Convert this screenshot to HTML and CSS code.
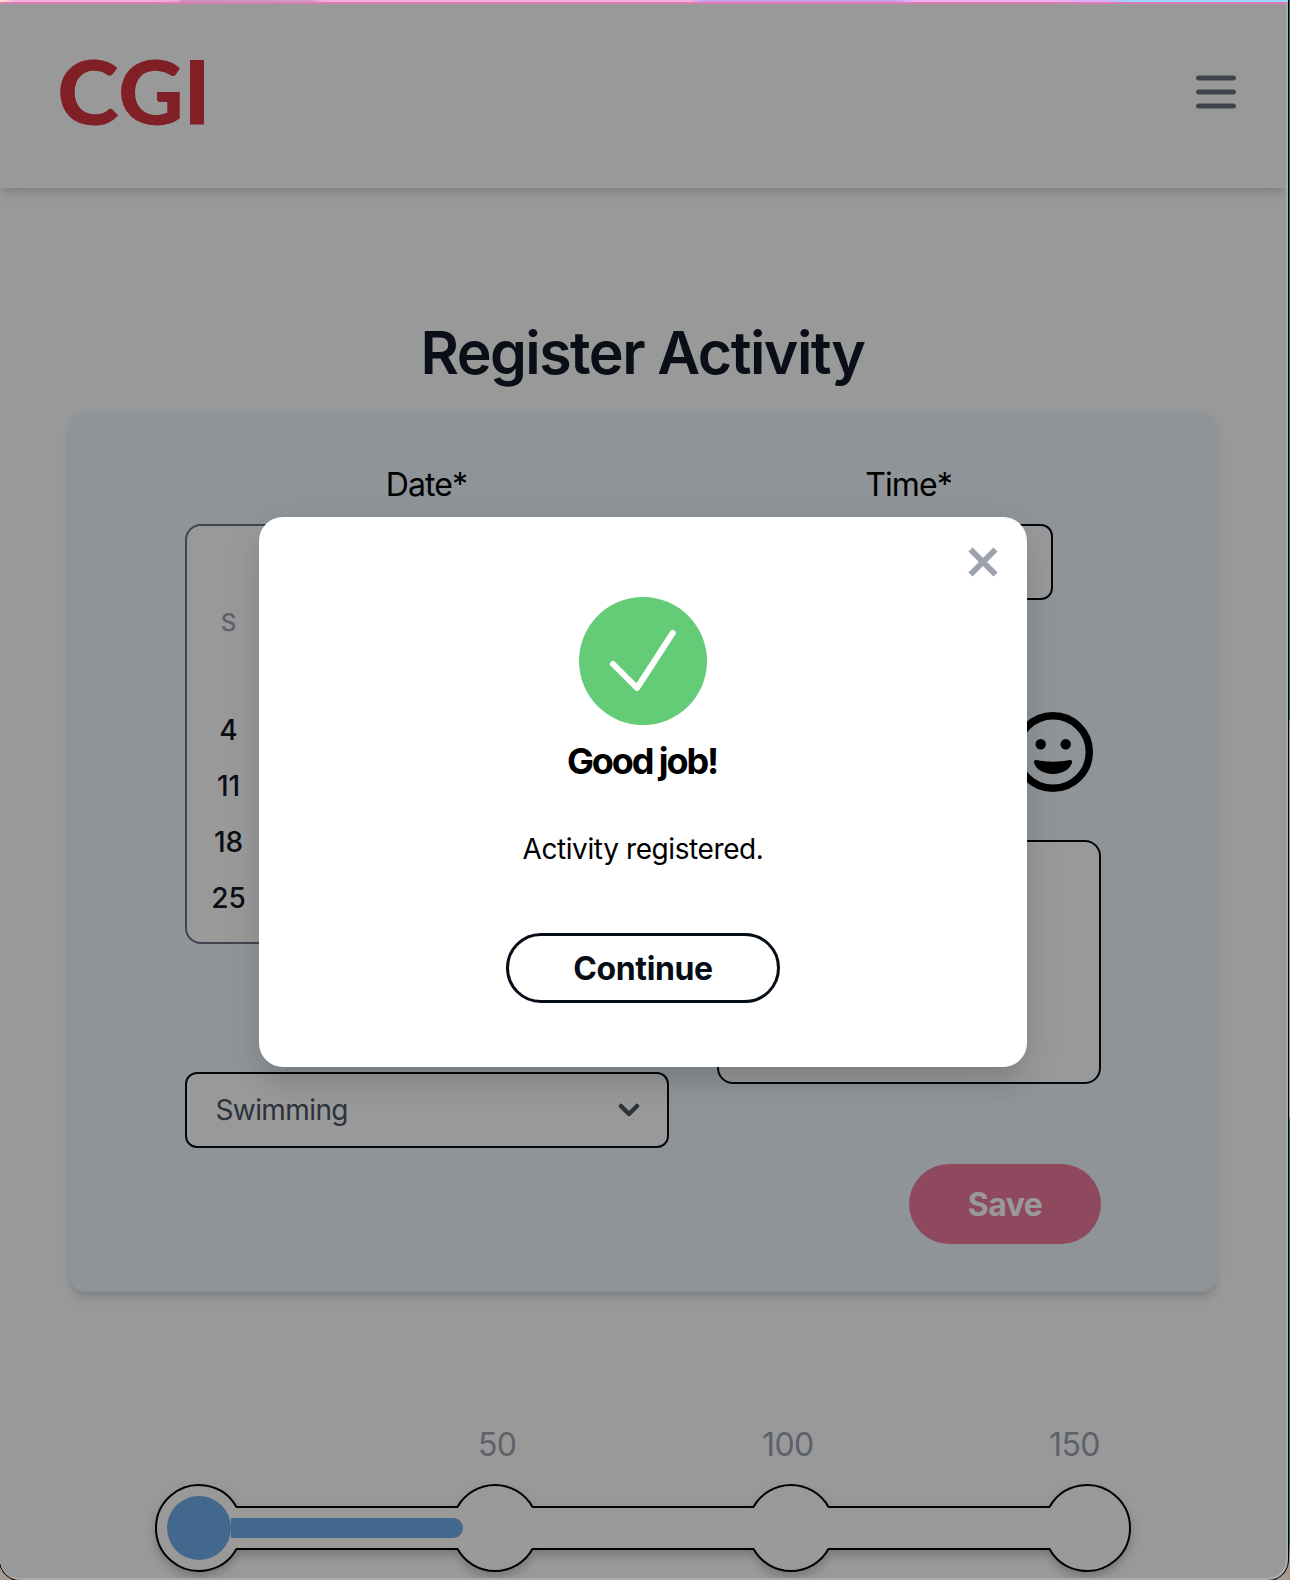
FILE: index.html
```html
<!DOCTYPE html>
<html lang="en">
<head>
<meta charset="utf-8">
<title>Register Activity</title>
<link rel="stylesheet" href="styles.css">
</head>
<body>
<div class="window">
  <div class="page">
    <header class="header">
      <svg class="logo" viewBox="-10 -30 166 130" width="166" height="130" role="img" aria-label="CGI">
        <text x="-3" y="66.500" textLength="62" lengthAdjust="spacingAndGlyphs">C</text>
        <text x="58" y="66.500" textLength="66" lengthAdjust="spacingAndGlyphs">G</text>
        <rect x="130" y="2" width="14" height="64.5"/>
      </svg>
      <svg class="menu" viewBox="0 0 40 36" width="40" height="36">
        <path d="M2.5 4h35M2.5 18h35M2.5 32h35"/>
      </svg>
    </header>
    <main class="main">
      <h1 class="title">Register Activity</h1>
      <section class="card">
        <div class="col col-date">
          <label class="label">Date*</label>
          <div class="calendar">
            <div class="weekday">S</div>
            <div class="day">4</div>
            <div class="day">11</div>
            <div class="day">18</div>
            <div class="day">25</div>
          </div>
          <div class="select">
            <span>Swimming</span>
            <svg viewBox="0 0 22 14" width="22" height="14"><path d="M3 3l8 8 8-8"/></svg>
          </div>
        </div>
        <div class="col col-time">
          <label class="label">Time*</label>
          <div class="time-input"></div>
          <svg class="smiley" viewBox="0 0 80 80" width="80" height="80">
            <circle cx="40" cy="40" r="36.3" fill="none" stroke="#000" stroke-width="7.4"/>
            <circle cx="27.7" cy="32.3" r="5.2"/>
            <circle cx="52.7" cy="32.3" r="5.2"/>
            <path d="M23.5 48c10 2.3 23 2.3 33 0 1.800-.3 3 1 2.500 2.600C57 57.500 50 62 40 62s-17-4.500-19-11.400C20.500 49 21.700 47.700 23.500 48z"/>
          </svg>
          <div class="textarea"></div>
          <button class="save">Save</button>
        </div>
      </section>
      <div class="progress">
        <div class="scale"><span>50</span><span>100</span><span>150</span></div>
        <svg class="track" viewBox="0 0 976 96" width="976" height="96">
          <path class="outline" d="M81.500 23H302.500A43 43 0 0 1 377.500 23H598.500A43 43 0 0 1 673.500 23H894.500A43 43 0 1 1 894.500 65H673.500A43 43 0 0 1 598.500 65H377.500A43 43 0 0 1 302.500 65H81.500A43 43 0 1 1 81.500 23Z"/>
          <circle class="fill" cx="44" cy="44" r="32"/>
          <path class="fill" d="M76 34H298.500a9.500 10 0 0 1 0 20H76z"/>
        </svg>
      </div>
    </main>
  </div>
  <div class="overlay">
    <div class="modal">
      <svg class="close" viewBox="0 0 30 30" width="30" height="30"><path d="M2.500 2.500l25 25M27.500 2.500l-25 25"/></svg>
      <svg class="check" viewBox="0 0 128 128" width="128" height="128">
        <circle cx="64" cy="64" r="64"/>
        <path d="M34 67l24 24 35.700-55"/>
      </svg>
      <h2 class="modal-title">Good job!</h2>
      <p class="modal-text">Activity registered.</p>
      <button class="continue">Continue</button>
    </div>
  </div>
</div>
</body>
</html>
```
FILE: styles.css
```css
* { box-sizing: border-box; }
body {
  margin: 0;
  width: 1290px;
  height: 1580px;
  overflow: hidden;
  font-family: Inter, "Liberation Sans", sans-serif;
  color: #000;
  background: linear-gradient(#28694a 0 719px, #999 721px 1117px, #28694a 1119px 1540px, #a59a92 1560px);
}
.window {
  position: relative;
  width: 1288px;
  height: 1580px;
  overflow: hidden;
  background: #aaa;
  border-radius: 0 0 20px 20px;
  box-shadow: 0 0 0 1px #000;
}
.window::before {
  content: "";
  display: block;
  height: 4px;
  background:
    linear-gradient(#e07cb4, #e07cb4) 0 2px / 100% 2px no-repeat,
    linear-gradient(90deg, #fde0d0 0, #f4b0dc 16px 150px, #e8a6d2 179px, #c894b8 181px, #d09cc0 310px, #f4b0dc 325px 690px, #c8a0f0 701px 895px, #eeb0f4 915px 1050px, #d8b0f4 1100px, #98d8f8 1130px);
}
.page {
  width: 1286px;
  height: 1574px;
  overflow: hidden;
  border-radius: 0 0 18px 18px;
  background: #fff;
}
.header {
  height: 184px;
  padding: 24px 50px 0 50px;
  display: flex;
  justify-content: space-between;
  align-items: flex-start;
  background: #fff;
  box-shadow: 0 8px 12px -2px rgba(0,0,0,.1), 0 4px 8px -2px rgba(0,0,0,.1);
}
.logo { fill: #d5353f; font: 900 90px Lato, sans-serif; }
.menu { margin-top: 46px; }
.menu path { fill: none; stroke: #6b7280; stroke-width: 5; stroke-linecap: round; }
.main { padding: 132px 69px 0 70px; }
.title {
  margin: 0 0 26px;
  padding-right: 2px;
  text-align: center;
  font-size: 59px;
  line-height: 66px;
  font-weight: 620;
  letter-spacing: -1.550px;
  color: #111827;
}
.card {
  width: 1147.500px;
  height: 880px;
  margin-left: -.5px;
  padding: 48px 115px 0 115.500px;
  display: flex;
  gap: 48px;
  border-radius: 16px;
  background: #eef6fc;
  background: #eef7fd;
  box-shadow: 0 8px 12px -2px rgba(0,0,0,.1), 0 4px 8px -2px rgba(0,0,0,.1);
}
.col { display: flex; flex-direction: column; flex: none; }
.col-date { width: 484px; }
.col-time { width: 384px; align-items: center; }
.label {
  display: block;
  height: 48px;
  margin-bottom: 16px;
  padding-right: 1px;
  line-height: 50px;
  text-align: center;
  font-size: 32px;
  letter-spacing: -.9px;
}
.calendar {
  height: 420px;
  padding: 75px 0 0 13.500px;
  border: 2px solid #6b7280;
  border-radius: 16px;
  background: #fff;
  font-size: 28px;
  color: #111827;
}
.weekday, .day { width: 56px; height: 56px; line-height: 57px; text-align: center; }
.day { font-weight: 450; }
.weekday { height: 101px; line-height: 44px; font-size: 24px; font-weight: 550; color: #9ca3af; }
.select, .time-input, .textarea { border: 2px solid #060d16; background: #fff; }
.select {
  display: flex;
  justify-content: space-between;
  align-items: center;
  height: 76px;
  margin-top: 128px;
  padding: 0 27px 0 28.500px;
  border-radius: 12px;
  font-size: 28px;
  line-height: 34px;
  letter-spacing: -.6px;
  color: #4b5563;
}
.select path { fill: none; stroke: #4b5563; stroke-width: 4.500; stroke-linecap: round; stroke-linejoin: round; }
.time-input { width: 288px; height: 76px; border-radius: 12px; }
.smiley { margin: 112px 8px 0 0; align-self: flex-end; }
.textarea { width: 384px; height: 244px; margin-top: 48px; border-radius: 16px; }
.save {
  align-self: flex-end;
  width: 192px;
  height: 80px;
  margin-top: 80px;
  padding: 0;
  border: 0;
  border-radius: 40px;
  background: #ee7b9d;
  color: #fff;
  font: 700 32px Inter, sans-serif;
  letter-spacing: -.5px;
}
.progress { width: 976px; margin: 128px 0 0 85px; }
.scale {
  display: grid;
  grid-template-columns: 284px 287px auto;
  padding-left: 323px;
  line-height: 50px;
  font-size: 32px;
  letter-spacing: -.6px;
  color: #9ca3af;
}
.track { display: block; margin-top: 14px; overflow: visible; }
.outline { fill: #fff; stroke: #000; stroke-width: 2; filter: drop-shadow(0 5px 5px rgba(0,0,0,.22)); }
.fill { fill: #71adeb; }
.overlay {
  position: absolute;
  inset: 4px 2px 2px 0;
  padding-top: 2px;
  display: flex;
  align-items: center;
  justify-content: center;
  border-radius: 0 0 18px 18px;
  background: rgba(0,0,0,.4);
}
.modal {
  position: relative;
  width: 768px;
  height: 550px;
  padding-top: 80px;
  display: flex;
  flex-direction: column;
  align-items: center;
  border-radius: 24px;
  background: #fff;
  box-shadow: 0 20px 25px -5px rgba(0,0,0,.1), 0 10px 40px 0 rgba(0,0,0,.08);
}
.close { position: absolute; top: 29.500px; right: 29.500px; }
.close path { fill: none; stroke: #9ca3af; stroke-width: 6; }
.check circle { fill: #64cb77; }
.check path { fill: none; stroke: #fff; stroke-width: 6; stroke-linecap: round; stroke-linejoin: round; }
.modal-title { margin: 15px 2px 0 0; font-size: 36px; line-height: 42px; font-weight: 650; letter-spacing: -2.100px; }
.modal-text { margin: 45px 0 0; font-size: 28px; line-height: 44px; font-weight: 370; letter-spacing: -.4px; }
.continue {
  width: 274px;
  height: 70px;
  margin-top: 62px;
  padding: 0;
  border: 3px solid #060d16;
  border-radius: 35px;
  background: #fff;
  color: #060d16;
  font: 700 32px Inter, sans-serif;
  letter-spacing: -.4px;
}
```
